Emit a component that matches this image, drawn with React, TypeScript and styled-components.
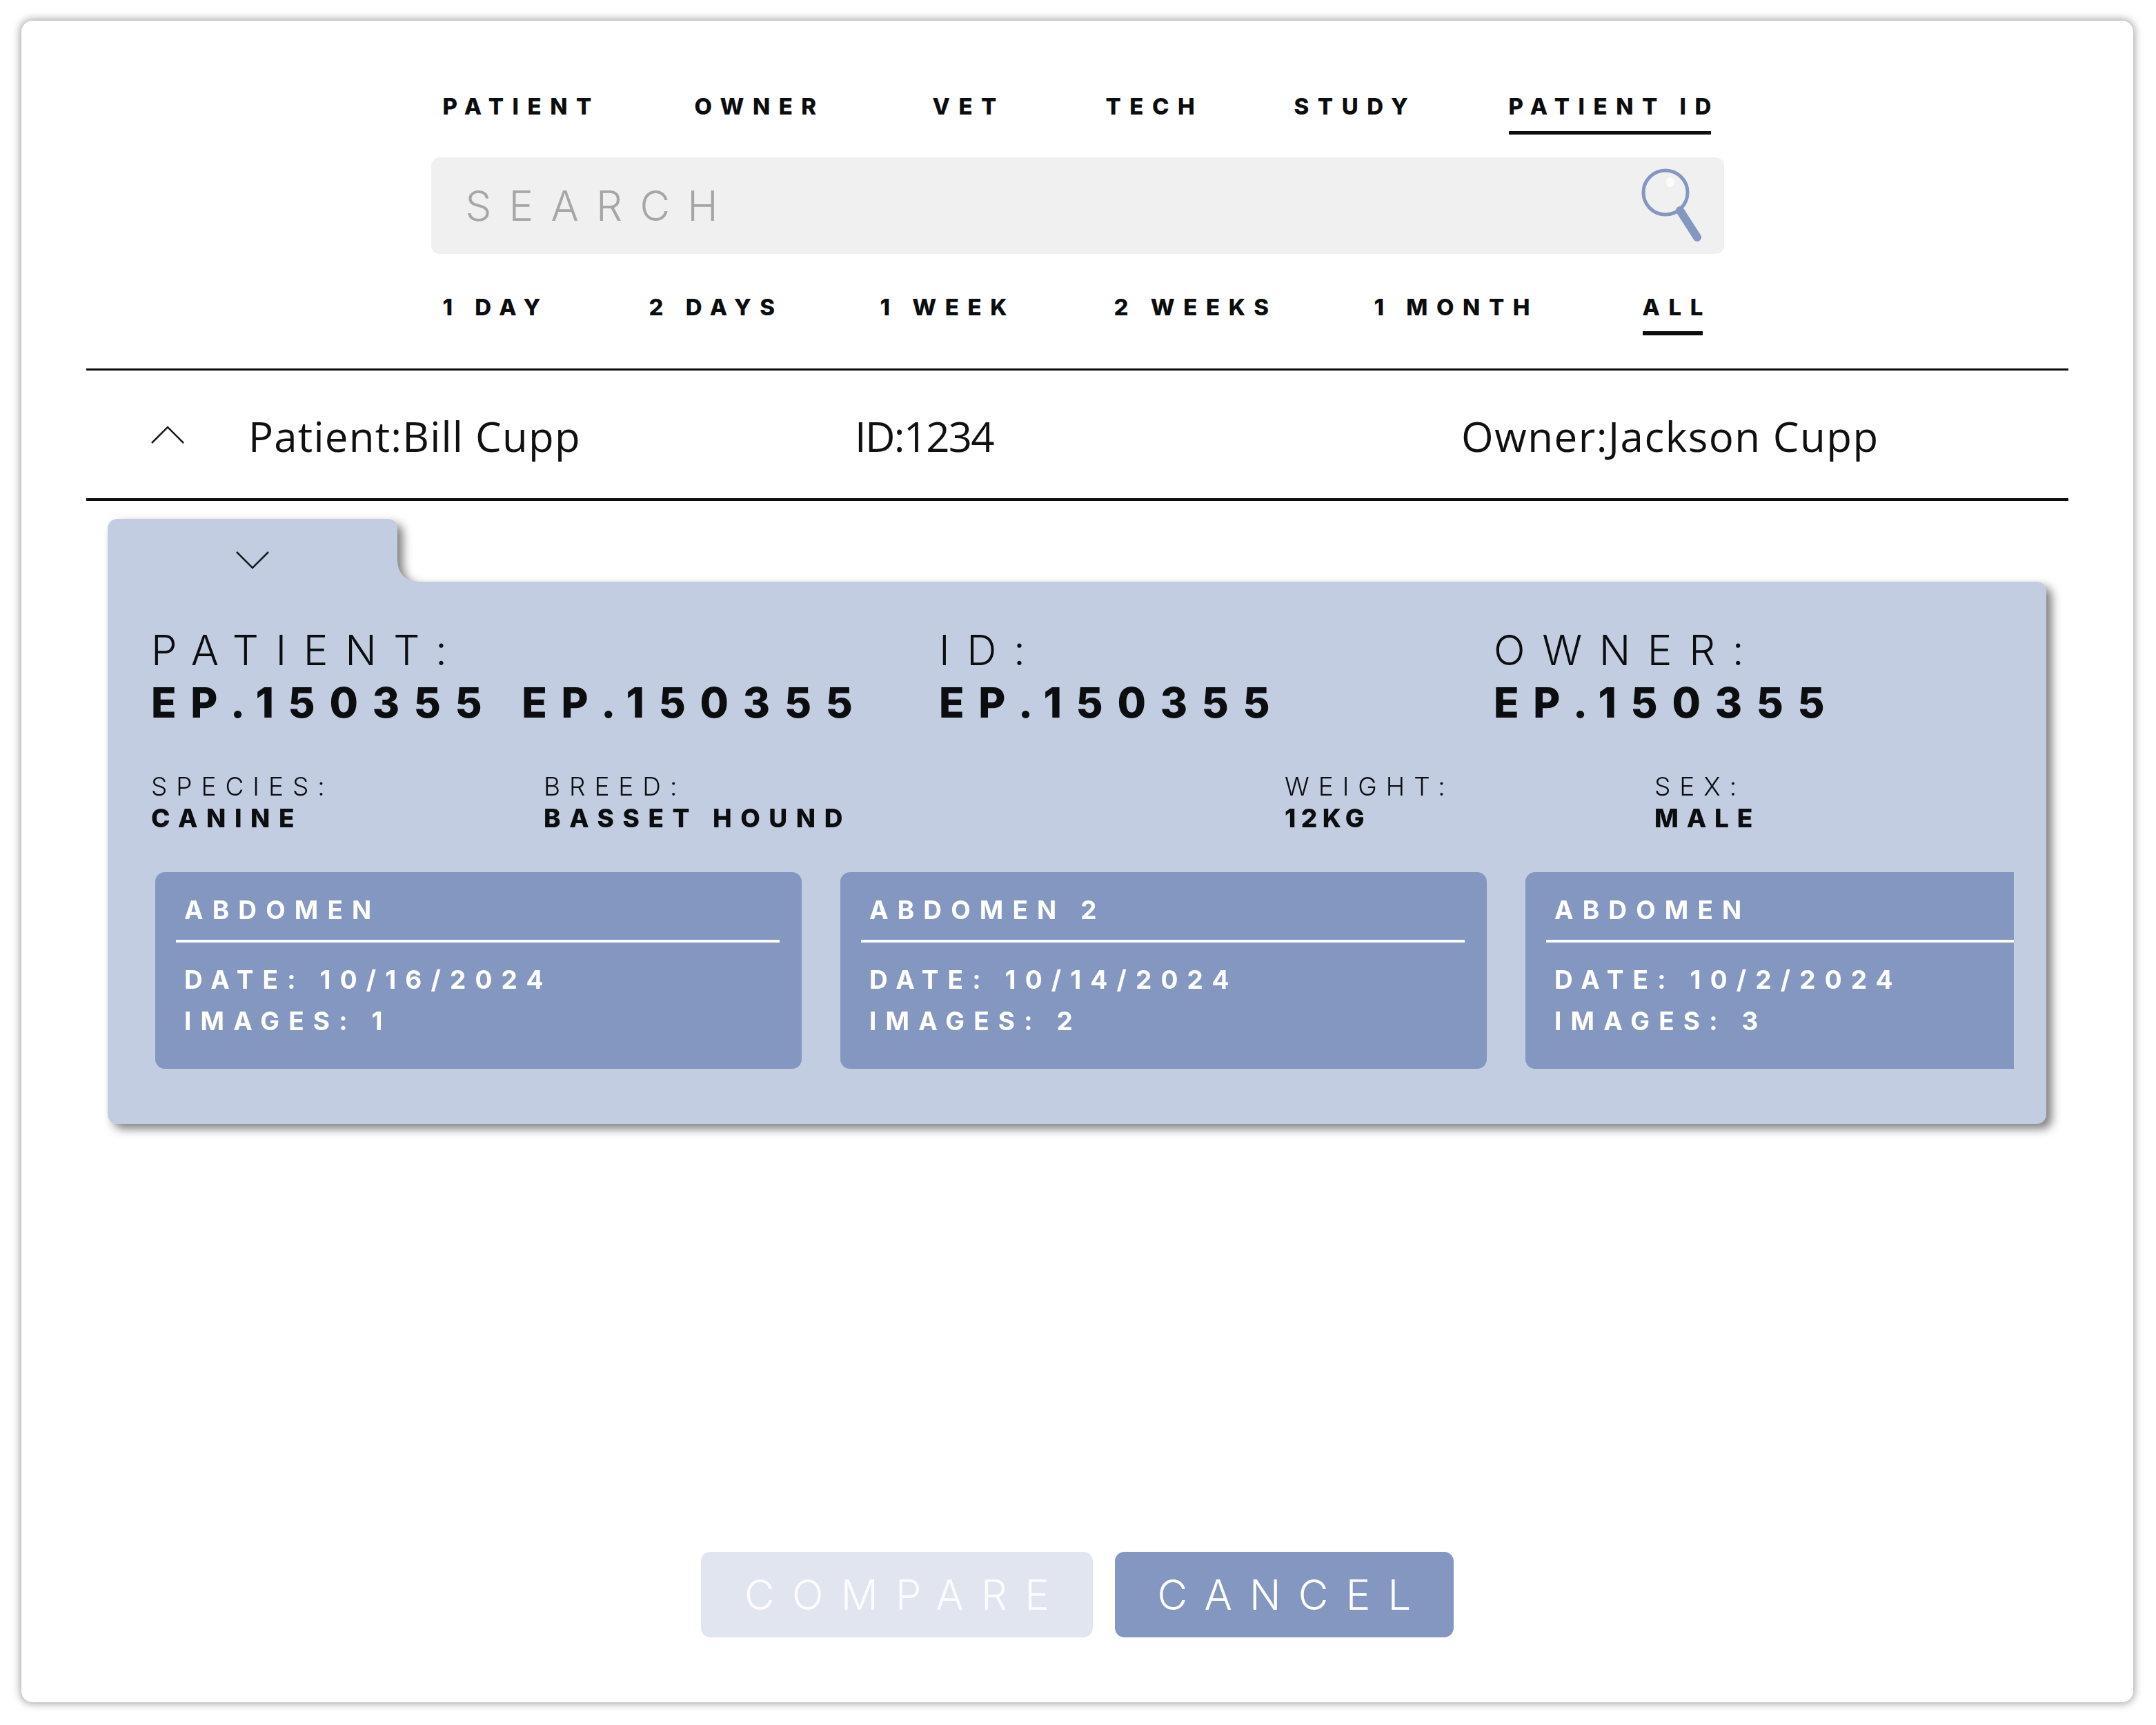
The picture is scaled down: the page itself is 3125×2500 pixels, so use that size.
import React from 'react';
import styled, { createGlobalStyle } from 'styled-components';

const sans = `Inter, "Liberation Sans", sans-serif`;
const accent = '#8497c1';
const folderBlue = '#c2cde2';

const GlobalStyle = createGlobalStyle`
  html, body {
    margin: 0;
    padding: 0;
    background: #fff;
  }
  * {
    box-sizing: border-box;
  }
`;

const Shell = styled.div`
  width: 3125px;
  height: 2500px;
  padding: 30px 33px 33px 31px;
  font-family: ${sans};
  color: #0c0d0f;
`;

const Card = styled.div`
  height: 100%;
  padding: 102px 94px 94px;
  display: flex;
  flex-direction: column;
  background: #fff;
  border-radius: 16px;
  box-shadow: 0 0 12px 2px rgba(0, 0, 0, 0.36);
`;

const Filters = styled.div`
  width: 1874px;
  align-self: center;
`;

const OptionRow = styled.div<{ $top?: number; $columns: string }>`
  display: grid;
  grid-template-columns: ${(p) => p.$columns};
  justify-items: start;
  padding-left: 17px;
  margin-top: ${(p) => p.$top ?? 0}px;
`;

const Option = styled.div<{ $active?: boolean; $gap: number; $thick: number }>`
  font-size: 33px;
  line-height: 44px;
  font-weight: 800;
  white-space: pre;
  padding-bottom: ${(p) => p.$gap}px;
  border-bottom: ${(p) => p.$thick}px solid ${(p) => (p.$active ? '#0c0d0f' : 'transparent')};
`;

const OptionText = styled.span`
  display: block;
  letter-spacing: 0.38em;
  margin-right: -0.38em;
`;

const SearchBar = styled.div`
  height: 140px;
  margin-top: 33px;
  padding: 0 31px 0 50px;
  display: flex;
  align-items: center;
  justify-content: space-between;
  background: #f0f0f0;
  border-radius: 12px;
`;

const SearchText = styled.span`
  font-size: 60px;
  font-weight: 300;
  letter-spacing: 0.42em;
  color: #a6a6a6;
`;

const PatientRow = styled.div`
  height: 192px;
  margin-top: 48px;
  padding: 4px 0 0 93px;
  display: grid;
  grid-template-columns: 142px 879px 879px 1fr;
  align-items: center;
  border-top: 3px solid #0c0d0f;
  border-bottom: 4px solid #0c0d0f;
`;

const PatientText = styled.span<{ $spacing: number }>`
  font-family: "Open Sans", "Noto Sans", sans-serif;
  font-size: 60px;
  line-height: 80px;
  white-space: pre;
  letter-spacing: ${(p) => p.$spacing}em;
  color: #101010;
`;

const Chevron = styled.svg`
  display: block;
  fill: none;
  stroke: #1c1c1f;
  stroke-width: 2.6;
`;

const RowChevron = styled(Chevron)`
  margin-bottom: 4px;
`;

const Folder = styled.div`
  margin: 26px 32px 0 31px;
  filter: drop-shadow(8px 7px 7px rgba(0, 0, 0, 0.5));
`;

const FolderTab = styled.div`
  position: relative;
  width: 420px;
  height: 91px;
  padding-top: 46px;
  display: flex;
  justify-content: center;
  align-items: flex-start;
  background: ${folderBlue};
  border-radius: 14px 14px 0 0;

  &::after {
    content: '';
    position: absolute;
    left: 100%;
    bottom: 0;
    width: 28px;
    height: 28px;
    background: radial-gradient(circle at 100% 0, transparent 27px, ${folderBlue} 28px);
  }
`;

const FolderBody = styled.div`
  height: 786px;
  padding: 61px 47px 0 63px;
  background: ${folderBlue};
  border-radius: 0 14px 14px 14px;
`;

const HeadRow = styled.div`
  display: grid;
  grid-template-columns: 1142px 804px 1fr;
`;

const HeadField = styled.div`
  font-size: 60px;
  line-height: 76px;
  white-space: pre;
`;

const HeadLabel = styled.div`
  font-weight: 300;
  letter-spacing: 0.41em;
`;

const HeadValue = styled.div`
  font-weight: 800;
  letter-spacing: 0.345em;
  word-spacing: 3px;
`;

const DetailRow = styled.div`
  margin-top: 61px;
  display: grid;
  grid-template-columns: 569px 1074px 536px 1fr;
`;

const DetailField = styled.div`
  font-size: 37px;
  line-height: 46px;
  white-space: pre;
`;

const DetailLabel = styled.div`
  font-weight: 300;
  letter-spacing: 0.35em;
`;

const DetailValue = styled.div<{ $spacing: number }>`
  font-weight: 800;
  letter-spacing: ${(p) => p.$spacing}em;
`;

const StudyStrip = styled.div`
  margin: 55px 0 0 6px;
  display: flex;
  gap: 56px;
  overflow: hidden;
`;

const StudyCard = styled.div`
  flex: 0 0 937px;
  height: 285px;
  background: ${accent};
  border-radius: 14px;
  color: #fff;
  font-size: 37px;
  font-weight: 700;
  letter-spacing: 0.355em;
  white-space: pre;
`;

const StudyTitle = styled.div`
  margin: 0 32px 0 30px;
  padding: 35px 0 23px 12px;
  line-height: 40px;
  border-bottom: 4px solid #fff;
`;

const StudyMeta = styled.div`
  padding: 24px 0 0 42px;
  line-height: 60px;
`;

const Actions = styled.div`
  margin-top: auto;
  display: flex;
  justify-content: center;
  gap: 32px;
`;

const ActionButton = styled.button<{ $width: number; $muted?: boolean }>`
  width: ${(p) => p.$width}px;
  height: 124px;
  padding: 0 0 0 0.42em;
  border: 0;
  border-radius: 14px;
  background: ${(p) => (p.$muted ? '#e1e5ef' : accent)};
  color: ${(p) => (p.$muted ? '#fbfcfe' : '#fff')};
  font-family: ${sans};
  font-size: 60px;
  font-weight: 300;
  letter-spacing: 0.42em;
`;

const SearchGlyph = () => (
  <svg width="90" height="110" viewBox="0 0 90 110">
    <circle cx="36" cy="36" r="32" fill="none" stroke={accent} strokeWidth="5" />
    <ellipse cx="43" cy="21" rx="6" ry="7" fill="#fff" opacity="0.8" />
    <path d="M57 62 L82 101" stroke={accent} strokeWidth="12" strokeLinecap="round" />
  </svg>
);

const subjects = ['PATIENT', 'OWNER', 'VET', 'TECH', 'STUDY', 'PATIENT ID'];
const ranges = ['1 DAY', '2 DAYS', '1 WEEK', '2 WEEKS', '1 MONTH', 'ALL'];

const heads = [
  { label: 'PATIENT:', value: 'EP.150355 EP.150355' },
  { label: 'ID:', value: 'EP.150355' },
  { label: 'OWNER:', value: 'EP.150355' },
];

const details = [
  { label: 'SPECIES:', value: 'CANINE', spacing: 0.34 },
  { label: 'BREED:', value: 'BASSET HOUND', spacing: 0.34 },
  { label: 'WEIGHT:', value: '12KG', spacing: 0.2 },
  { label: 'SEX:', value: 'MALE', spacing: 0.32 },
];

const studies = [
  { title: 'ABDOMEN', date: '10/16/2024', images: 1 },
  { title: 'ABDOMEN 2', date: '10/14/2024', images: 2 },
  { title: 'ABDOMEN', date: '10/2/2024', images: 3 },
];

export default function App() {
  return (
    <Shell>
      <GlobalStyle />
      <Card>
        <Filters>
          <OptionRow $columns="365px 345px 251px 273px 311px auto">
            {subjects.map((s) => (
              <Option key={s} $active={s === 'PATIENT ID'} $gap={14} $thick={5}>
                <OptionText>{s}</OptionText>
              </Option>
            ))}
          </OptionRow>
          <SearchBar>
            <SearchText>SEARCH</SearchText>
            <SearchGlyph />
          </SearchBar>
          <OptionRow $top={55} $columns="299px 335px 339px 377px 389px auto">
            {ranges.map((r) => (
              <Option key={r} $active={r === 'ALL'} $gap={13} $thick={6}>
                <OptionText>{r}</OptionText>
              </Option>
            ))}
          </OptionRow>
        </Filters>

        <PatientRow>
          <RowChevron width="50" height="28" viewBox="0 0 50 28">
            <path d="M2 26 L25 3 L48 26" />
          </RowChevron>
          <PatientText $spacing={0.02}>Patient:Bill Cupp</PatientText>
          <PatientText $spacing={-0.03}>ID:1234</PatientText>
          <PatientText $spacing={0.025}>Owner:Jackson Cupp</PatientText>
        </PatientRow>

        <Folder>
          <FolderTab>
            <Chevron width="50" height="28" viewBox="0 0 50 28">
              <path d="M2 2 L25 25 L48 2" />
            </Chevron>
          </FolderTab>
          <FolderBody>
            <HeadRow>
              {heads.map((h) => (
                <HeadField key={h.label}>
                  <HeadLabel>{h.label}</HeadLabel>
                  <HeadValue>{h.value}</HeadValue>
                </HeadField>
              ))}
            </HeadRow>
            <DetailRow>
              {details.map((d) => (
                <DetailField key={d.label}>
                  <DetailLabel>{d.label}</DetailLabel>
                  <DetailValue $spacing={d.spacing}>{d.value}</DetailValue>
                </DetailField>
              ))}
            </DetailRow>
            <StudyStrip>
              {studies.map((s) => (
                <StudyCard key={s.date}>
                  <StudyTitle>{s.title}</StudyTitle>
                  <StudyMeta>
                    <div>DATE: {s.date}</div>
                    <div>IMAGES: {s.images}</div>
                  </StudyMeta>
                </StudyCard>
              ))}
            </StudyStrip>
          </FolderBody>
        </Folder>

        <Actions>
          <ActionButton $width={568} $muted>
            COMPARE
          </ActionButton>
          <ActionButton $width={491}>CANCEL</ActionButton>
        </Actions>
      </Card>
    </Shell>
  );
}
